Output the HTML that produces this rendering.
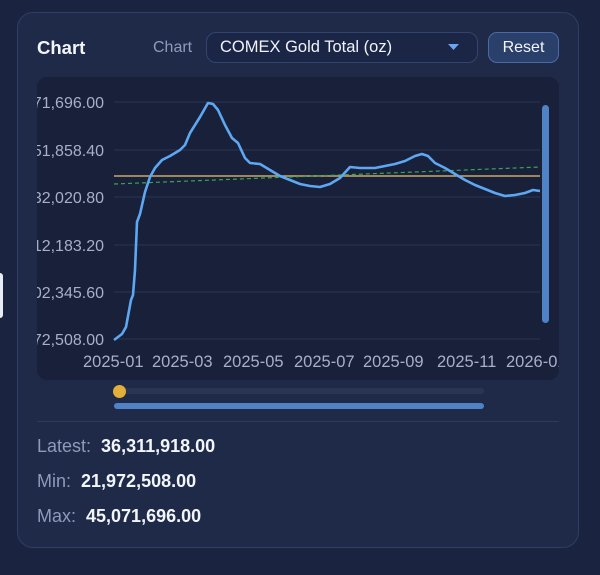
<!DOCTYPE html>
<html><head><style>
*{margin:0;padding:0;box-sizing:border-box}
body{width:600px;height:575px;background:#1a2340;font-family:"Liberation Sans",sans-serif;position:relative;overflow:hidden}
.card{position:absolute;left:17px;top:12px;width:562px;height:536px;background:#1f2a48;border:1px solid #2f3e66;border-radius:16px}
.abs{position:absolute}
</style></head><body>
<div class="abs" style="left:0;top:273px;width:3px;height:45px;background:#e8ecf4;border-radius:0 3px 3px 0"></div>
<div class="card"></div>
<div class="abs" style="left:37px;top:37px;font-size:18.5px;font-weight:bold;color:#f2f5fb">Chart</div>
<div class="abs" style="left:153px;top:39px;font-size:16px;color:#8d9abb">Chart</div>
<div class="abs" style="left:206px;top:32px;width:272px;height:31px;border:1px solid #33446e;border-radius:10px;background:#1b2545"></div>
<div class="abs" style="left:220px;top:38px;font-size:16.5px;color:#f0f3fa">COMEX Gold Total (oz)</div>
<svg class="abs" style="left:448px;top:44px" width="11" height="7"><path d="M0 0L11 0L5.5 6Z" fill="#6aa6ee"/></svg>
<div class="abs" style="left:488px;top:32px;width:71px;height:31px;border:1px solid #4a6aa6;border-radius:9px;background:#2b3f6b;color:#f2f5fb;font-size:16px;text-align:center;line-height:30px">Reset</div>
<div class="abs" style="left:37px;top:77px;width:522px;height:303px;background:#18203a;border-radius:10px;overflow:hidden">
<svg width="522" height="303" style="position:absolute;left:0;top:0">
<g stroke="#2b3653" stroke-width="1">
<line x1="77" y1="25" x2="503" y2="25"/><line x1="77" y1="73" x2="503" y2="73"/><line x1="77" y1="120" x2="503" y2="120"/><line x1="77" y1="168" x2="503" y2="168"/><line x1="77" y1="215" x2="503" y2="215"/><line x1="77" y1="262" x2="503" y2="262"/></g>
<g font-family="Liberation Sans" font-size="16" fill="#a7b0c8" text-anchor="end">
<text x="67" y="31">45,071,696.00</text><text x="67" y="79">41,851,858.40</text><text x="67" y="126">32,032,020.80</text><text x="67" y="174">26,012,183.20</text><text x="67" y="221">23,002,345.60</text><text x="67" y="268">21,972,508.00</text></g>
<g font-family="Liberation Sans" font-size="16.5" fill="#a7b0c8">
<text x="46" y="290">2025-01</text><text x="115" y="290">2025-03</text><text x="186" y="290">2025-05</text><text x="257" y="290">2025-07</text><text x="326" y="290">2025-09</text><text x="400" y="290">2025-11</text><text x="469" y="290">2026-01</text></g>
<line x1="77" y1="99" x2="503" y2="99" stroke="#c9a866" stroke-width="1.5"/>
<line x1="77" y1="107" x2="503" y2="90" stroke="#3aa35a" stroke-width="1.2" stroke-dasharray="4,3"/>
<polyline fill="none" stroke="#5ea7f2" stroke-width="2.6" stroke-linejoin="round" points="77,263 85,257 89,250 94,223 96,218 98,193 100,145 103,137 108,115 113,100 118,91 125,83 133,79 143,73 148,68 153,56 163,40 171,26 176,27 181,33 188,48 195,61 201,66 208,81 213,86 223,87 233,93 243,99 253,103 263,107 273,109 283,110 293,107 303,101 313,90 323,91 338,91 348,89 358,87 368,84 378,79 385,77 391,79 398,86 408,91 418,97 428,103 438,108 448,112 458,116 468,119 478,118 488,116 496,113 503,114"/>
<rect x="505" y="28" width="7" height="218" rx="3.5" fill="#5082c6"/>
</svg></div>
<div class="abs" style="left:114px;top:388px;width:370px;height:6px;background:#2a3552;border-radius:3px"></div>
<div class="abs" style="left:113px;top:385px;width:13px;height:13px;background:#e3ae3a;border-radius:50%"></div>
<div class="abs" style="left:114px;top:403px;width:370px;height:6px;background:#5082c6;border-radius:3px"></div>
<div class="abs" style="left:37px;top:421px;width:522px;height:1px;background:#2e3a5c"></div>
<div class="abs" style="left:37px;top:436px;font-size:18px;color:#8d9abb">Latest:&nbsp; <b style="color:#f2f5fb">36,311,918.00</b></div>
<div class="abs" style="left:37px;top:471px;font-size:18px;color:#8d9abb">Min:&nbsp; <b style="color:#f2f5fb">21,972,508.00</b></div>
<div class="abs" style="left:37px;top:506px;font-size:18px;color:#8d9abb">Max:&nbsp; <b style="color:#f2f5fb">45,071,696.00</b></div>
</body></html>
